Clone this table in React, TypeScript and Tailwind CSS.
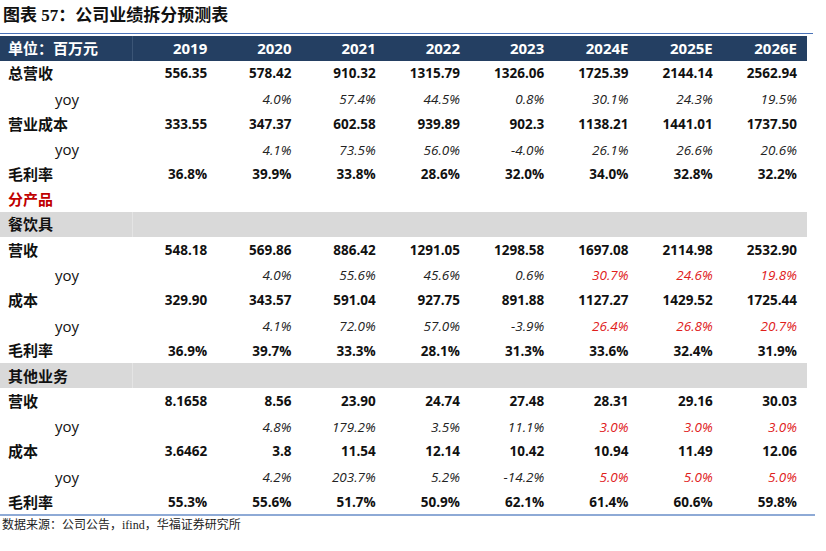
const years = ["2019", "2020", "2021", "2022", "2023", "2024E", "2025E", "2026E"];

type Row =
  | { kind: "main"; label: string; values: string[] }
  | { kind: "yoy"; values: string[]; red?: number }
  | { kind: "section"; label: string }
  | { kind: "group"; label: string };

const rows: Row[] = [
  { kind: "main", label: "总营收", values: ["556.35", "578.42", "910.32", "1315.79", "1326.06", "1725.39", "2144.14", "2562.94"] },
  { kind: "yoy", values: ["", "4.0%", "57.4%", "44.5%", "0.8%", "30.1%", "24.3%", "19.5%"] },
  { kind: "main", label: "营业成本", values: ["333.55", "347.37", "602.58", "939.89", "902.3", "1138.21", "1441.01", "1737.50"] },
  { kind: "yoy", values: ["", "4.1%", "73.5%", "56.0%", "-4.0%", "26.1%", "26.6%", "20.6%"] },
  { kind: "main", label: "毛利率", values: ["36.8%", "39.9%", "33.8%", "28.6%", "32.0%", "34.0%", "32.8%", "32.2%"] },
  { kind: "section", label: "分产品" },
  { kind: "group", label: "餐饮具" },
  { kind: "main", label: "营收", values: ["548.18", "569.86", "886.42", "1291.05", "1298.58", "1697.08", "2114.98", "2532.90"] },
  { kind: "yoy", values: ["", "4.0%", "55.6%", "45.6%", "0.6%", "30.7%", "24.6%", "19.8%"], red: 5 },
  { kind: "main", label: "成本", values: ["329.90", "343.57", "591.04", "927.75", "891.88", "1127.27", "1429.52", "1725.44"] },
  { kind: "yoy", values: ["", "4.1%", "72.0%", "57.0%", "-3.9%", "26.4%", "26.8%", "20.7%"], red: 5 },
  { kind: "main", label: "毛利率", values: ["36.9%", "39.7%", "33.3%", "28.1%", "31.3%", "33.6%", "32.4%", "31.9%"] },
  { kind: "group", label: "其他业务" },
  { kind: "main", label: "营收", values: ["8.1658", "8.56", "23.90", "24.74", "27.48", "28.31", "29.16", "30.03"] },
  { kind: "yoy", values: ["", "4.8%", "179.2%", "3.5%", "11.1%", "3.0%", "3.0%", "3.0%"], red: 5 },
  { kind: "main", label: "成本", values: ["3.6462", "3.8", "11.54", "12.14", "10.42", "10.94", "11.49", "12.06"] },
  { kind: "yoy", values: ["", "4.2%", "203.7%", "5.2%", "-14.2%", "5.0%", "5.0%", "5.0%"], red: 5 },
  { kind: "main", label: "毛利率", values: ["55.3%", "55.6%", "51.7%", "50.9%", "62.1%", "61.4%", "60.6%", "59.8%"] },
];

const sans = "font-['Open_Sans','Noto_Sans_CJK_SC',sans-serif]";

function DataRow({ row }: { row: Row }) {
  if (row.kind === "section") {
    return (
      <div className="flex h-[25.2px] items-center pl-[8px] text-[15px] font-bold text-[#c00000]">
        {row.label}
      </div>
    );
  }
  if (row.kind === "group") {
    return (
      <div className="flex h-[25.2px] bg-[#d9d9d9]">
        <div className="flex w-[133px] items-center border-r border-[#e4e4e4] pl-[8px] text-[15px] font-bold text-[#111]">
          {row.label}
        </div>
        <div className="flex-1" />
      </div>
    );
  }
  if (row.kind === "yoy") {
    return (
      <div className="flex h-[25.2px] items-center">
        <div className="w-[133px] pl-[55px] pt-[1px] text-[15px] text-[#111]">yoy</div>
        {row.values.map((v, i) => (
          <div
            key={i}
            className={
              "w-[84.25px] pr-[10px] pt-[1px] text-right text-[13.5px] italic " +
              (row.red !== undefined && i >= row.red ? "text-[#e0201b]" : "text-[#222]")
            }
          >
            {v}
          </div>
        ))}
      </div>
    );
  }
  return (
    <div className="flex h-[25.2px] items-center">
      <div className="w-[133px] pl-[8px] text-[15px] font-bold text-[#111]">{row.label}</div>
      {row.values.map((v, i) => (
        <div key={i} className="w-[84.25px] pr-[10px] text-right text-[13.5px] font-bold text-[#111]">
          {v}
        </div>
      ))}
    </div>
  );
}

export default function App() {
  return (
    <div className={`relative h-[551px] w-[826px] overflow-hidden bg-white ${sans}`}>
      <div className="h-[33px] pl-[3px] pt-[6px] font-['Liberation_Serif','Noto_Sans_CJK_SC',serif] text-[17px] font-bold leading-[20px] text-[#111]">
        图表 57：公司业绩拆分预测表
      </div>
      <div className="h-px w-[813px] bg-[#4a72b8]" />
      <div className="mt-[2px] w-[807px]">
        <div className="flex h-[25px] items-center bg-[#243f62] text-white">
          <div className="flex h-full w-[133px] items-center border-r border-[#3b5576] pl-[8px] text-[15px] font-bold">
            单位：百万元
          </div>
          {years.map((y) => (
            <div key={y} className="w-[84.25px] pr-[10px] text-right text-[15px] font-bold">
              {y}
            </div>
          ))}
        </div>
        {rows.map((r, i) => (
          <DataRow key={i} row={r} />
        ))}
      </div>
      <div className="h-[2px] w-[815px] bg-[#8eaad6]" />
      <div className="pl-[2px] pt-[2px] font-['Liberation_Serif','Noto_Sans_CJK_SC',serif] text-[12px] leading-[14px] text-[#222]">
        数据来源：公司公告，ifind，华福证券研究所
      </div>
    </div>
  );
}
